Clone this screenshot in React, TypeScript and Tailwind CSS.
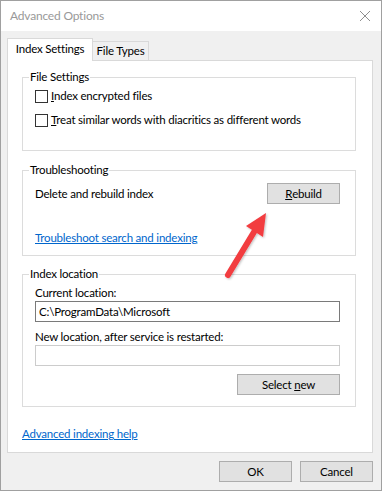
import React from "react"

const font = { fontFamily: 'Lato, "Segoe UI", Arial, sans-serif' }

function Checkbox({ accel, rest }: { accel: string; rest: string }) {
  return (
    <label className="flex h-[20px] items-center gap-[3px] whitespace-nowrap">
      <span className="h-[13px] w-[13px] flex-none border border-[#333333] bg-white" />
      <span>
        <span className="underline">{accel}</span>
        {rest}
      </span>
    </label>
  )
}

function Button({ children, className = "" }: { children: React.ReactNode; className?: string }) {
  return (
    <button className={`flex h-[21px] items-center justify-center whitespace-pre border border-[#adadad] bg-[#e1e1e1] text-black ${className}`}>
      {children}
    </button>
  )
}

function Group({ title, height, children }: { title: string; height: string; children: React.ReactNode }) {
  return (
    <fieldset className={`mx-[14px] mr-[16px] border border-[#dcdcdc] ${height}`}>
      <legend className="ml-[6px] px-[1px] leading-[16px]">{title}</legend>
      <div className="pl-[12px] pr-[15px]">{children}</div>
    </fieldset>
  )
}

export default function App() {
  return (
    <div
      style={font}
      className="relative flex h-[491px] w-[382px] flex-col border border-[#a0a0a0] bg-[#f0f0f0] text-[11.5px] leading-[16px] tracking-[-0.2px] text-black"
    >
      {/* title bar */}
      <div className="flex h-[30px] flex-none items-center justify-between bg-white pl-[9px] pr-[9px]">
        <span className="text-[12px] text-[#999999]">Advanced Options</span>
        <svg width="12" height="12" viewBox="0 0 12 12" className="mr-[1px]">
          <path d="M1 1 L11 11 M11 1 L1 11" stroke="#8f8f8f" strokeWidth="1" fill="none" />
        </svg>
      </div>

      <div className="flex flex-1 flex-col pl-[6px] pr-[8px] pt-[7px]">
        {/* tabs */}
        <div className="flex h-[22px] items-end whitespace-nowrap">
          <div className="relative z-10 -mb-px flex h-[23px] w-[86px] items-center justify-center border border-b-0 border-[#d9d9d9] bg-white pb-[2px]">
            Index Settings
          </div>
          <div className="flex h-[19px] w-[56px] items-center justify-center border border-b-0 border-l-0 border-[#d9d9d9] bg-[#f0f0f0]">
            File Types
          </div>
        </div>

        {/* panel */}
        <div className="flex h-[393px] flex-none flex-col border border-[#d9d9d9] bg-white pt-[8px]">
          <Group title="File Settings" height="h-[82px]">
            <div className="flex flex-col gap-[4px] pt-[1px]">
              <Checkbox accel="I" rest="ndex encrypted files" />
              <Checkbox accel="T" rest="reat similar words with diacritics as different words" />
            </div>
          </Group>

          <div className="mt-[11px]">
            <Group title="Troubleshooting" height="h-[94px]">
              <div className="flex items-center justify-between pt-[5px]">
                <span>Delete and rebuild index</span>
                <Button className="w-[73px]">
                  <span className="underline">R</span>ebuild
                </Button>
              </div>
              <a className="mt-[26px] block w-fit text-[#0066cc] underline">Troubleshoot search and indexing</a>
            </Group>
          </div>

          <div className="mt-[10px]">
            <Group title="Index location" height="h-[141px]">
              <div className="mt-[3px]">Current location:</div>
              <div className="flex h-[21px] items-center border border-[#7a7a7a] bg-white px-[3px]">
                C:\ProgramData\Microsoft
              </div>
              <div className="mt-[7px]">New location, after service is restarted:</div>
              <div className="h-[21px] border border-[#cccccc] bg-white" />
              <div className="mt-[8px] flex justify-end">
                <Button className="w-[103px]">
                  {"Select "}<span className="underline">n</span>ew
                </Button>
              </div>
            </Group>
          </div>

          <a className="ml-[14px] mt-[19px] block w-fit text-[#0066cc] underline">Advanced indexing help</a>
        </div>

        {/* dialog buttons */}
        <div className="mt-[8px] flex justify-end gap-[8px]">
          <Button className="w-[73px]">OK</Button>
          <Button className="w-[73px]">Cancel</Button>
        </div>
      </div>

      {/* annotation arrow */}
      <svg className="pointer-events-none absolute left-0 top-0" width="382" height="491">
        <defs>
          <filter id="sh" x="-50%" y="-50%" width="200%" height="200%">
            <feDropShadow dx="1" dy="1" stdDeviation="1.2" floodColor="#000" floodOpacity="0.25" />
          </filter>
        </defs>
        <g filter="url(#sh)">
          <line x1="227" y1="274" x2="253" y2="231" stroke="#f23c40" strokeWidth="6" strokeLinecap="round" />
          <polygon points="265,212 262,236 245,225" fill="#f23c40" />
        </g>
      </svg>
    </div>
  )
}
